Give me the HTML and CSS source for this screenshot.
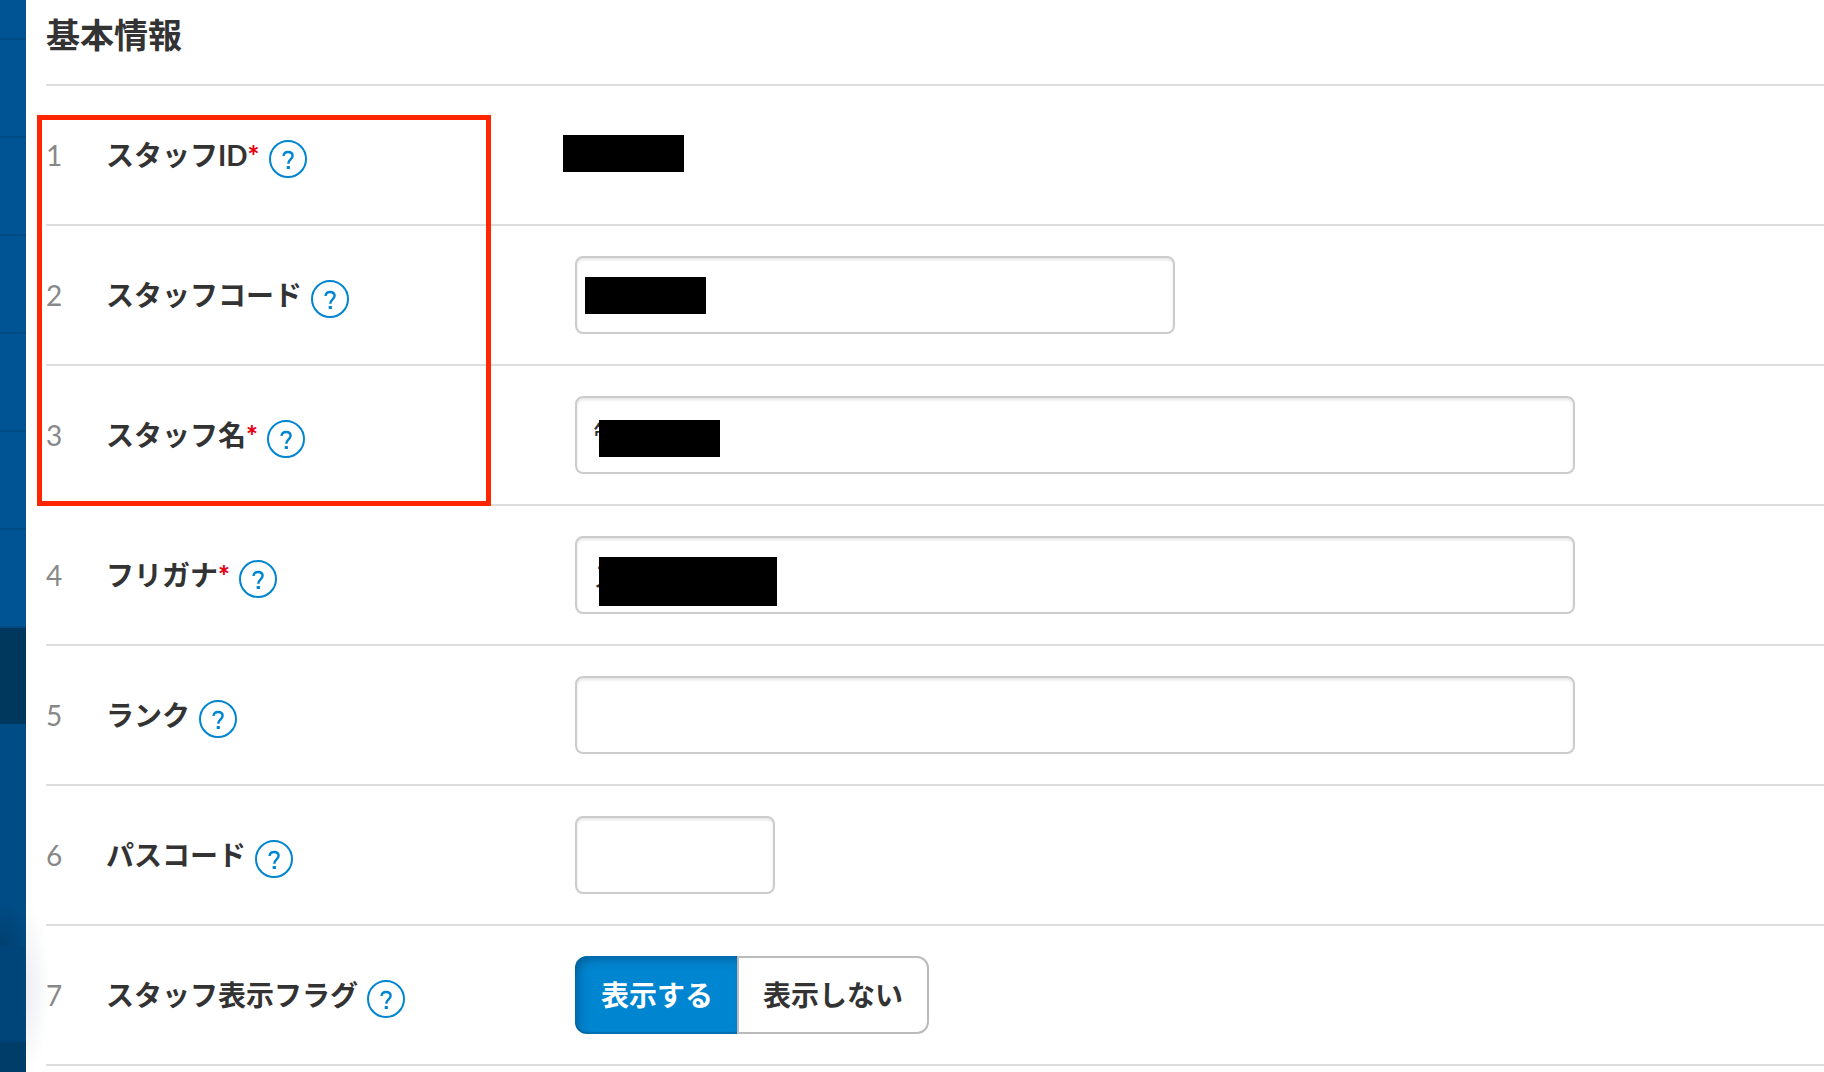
FILE: index.html
```html
<!DOCTYPE html>
<html lang="ja">
<head>
<meta charset="utf-8">
<meta name="viewport" content="width=device-width, initial-scale=1">
<title>基本情報</title>
<link rel="stylesheet" href="styles.css">
</head>
<body>
<svg class="defs" aria-hidden="true">
  <symbol id="help" viewBox="0 0 38 38">
    <circle cx="19" cy="19" r="18" fill="none" stroke="currentColor" stroke-width="2"/>
    <path d="M14.6 16c0-2.6 1.8-4 4.4-4s4.6 1.4 4.6 3.8c0 3.6-4.3 3.8-4.3 8" fill="none" stroke="currentColor" stroke-width="2.4"/>
    <path d="M17.7 26h3.2v3h-3.2z" fill="currentColor"/>
  </symbol>
</svg>
<div class="page">
  <nav class="sidebar" aria-label="メニュー">
    <a class="nav-item nav-item-cut" href="#"></a>
    <a class="nav-item" href="#"></a>
    <a class="nav-item" href="#"></a>
    <a class="nav-item" href="#"></a>
    <a class="nav-item" href="#"></a>
    <a class="nav-item" href="#"></a>
    <a class="nav-item" href="#"></a>
    <a class="nav-item nav-item-active" href="#"></a>
    <div class="subnav"></div>
    <a class="nav-item nav-item-lower" href="#"></a>
    <div class="nav-foot"></div>
  </nav>
  <main class="main">
    <h1 class="title">基本情報</h1>
    <form class="form">
      <div class="row">
        <span class="num">1</span>
        <div class="name"><label for="staff-id">スタッフID<span class="req">*</span></label><button type="button" class="help" aria-label="ヘルプ"><svg><use href="#help"/></svg></button></div>
        <div class="field"><output id="staff-id"></output><span class="mask mask-id"></span></div>
      </div>
      <div class="row">
        <span class="num">2</span>
        <div class="name"><label for="code">スタッフコード</label><button type="button" class="help" aria-label="ヘルプ"><svg><use href="#help"/></svg></button></div>
        <div class="field"><input class="input input-medium" id="code" type="text"><span class="mask mask-code"></span></div>
      </div>
      <div class="row">
        <span class="num">3</span>
        <div class="name"><label for="staff-name">スタッフ名<span class="req">*</span></label><button type="button" class="help" aria-label="ヘルプ"><svg><use href="#help"/></svg></button></div>
        <div class="field"><input class="input" id="staff-name" type="text" value="管"><span class="mask mask-name"></span></div>
      </div>
      <div class="row">
        <span class="num">4</span>
        <div class="name"><label for="kana">フリガナ<span class="req">*</span></label><button type="button" class="help" aria-label="ヘルプ"><svg><use href="#help"/></svg></button></div>
        <div class="field"><input class="input" id="kana" type="text" value="ス"><span class="mask mask-kana"></span></div>
      </div>
      <div class="row">
        <span class="num">5</span>
        <div class="name"><label for="rank">ランク</label><button type="button" class="help" aria-label="ヘルプ"><svg><use href="#help"/></svg></button></div>
        <div class="field"><input class="input" id="rank" type="text"></div>
      </div>
      <div class="row">
        <span class="num">6</span>
        <div class="name"><label for="pass">パスコード</label><button type="button" class="help" aria-label="ヘルプ"><svg><use href="#help"/></svg></button></div>
        <div class="field"><input class="input input-small" id="pass" type="text"></div>
      </div>
      <div class="row">
        <span class="num">7</span>
        <div class="name"><span id="flag">スタッフ表示フラグ</span><button type="button" class="help" aria-label="ヘルプ"><svg><use href="#help"/></svg></button></div>
        <div class="field toggle" role="radiogroup" aria-labelledby="flag">
          <label class="choice"><input type="radio" name="show" checked><span>表示する</span></label>
          <label class="choice"><input type="radio" name="show"><span>表示しない</span></label>
        </div>
      </div>
    </form>
    <div class="callout"></div>
  </main>
</div>
</body>
</html>
```
FILE: styles.css
```css
* {
  box-sizing: border-box;
}

body {
  margin: 0;
  background: #fff;
  color: #333;
  font-family: Lato, "Noto Sans CJK JP", sans-serif;
  font-size: 28px;
  line-height: 40px;
}

.defs {
  display: none;
}

.page {
  display: flex;
  min-height: 100vh;
}

/* Sidebar */
.sidebar {
  display: flex;
  flex: none;
  flex-direction: column;
  width: 26px;
  background: #005493;
}

.nav-item {
  height: 98px;
  border-bottom: 2px solid #004b85;
}

.nav-item-cut {
  height: 40px;
}

.nav-item-active,
.nav-item-lower {
  height: 96px;
  border-bottom: 0;
  background: #00375d;
}

.nav-item-lower {
  background: #00457a;
}

.subnav {
  height: 222px;
  background: radial-gradient(36px 44px at 0 100%, #00406f, #004c86);
}

.nav-foot {
  flex: 1;
  background: #003d68;
}

/* Main column */
.main {
  position: relative;
  flex: 1;
  min-width: 0;
  padding-left: 20px;
  background: radial-gradient(24px 88px at 0 988px, #eceef2, #fff);
}

.title {
  margin: 0;
  padding: 10px 0 24px;
  border-bottom: 2px solid #ddd;
  font-size: 34px;
  line-height: 50px;
}

.row {
  display: grid;
  grid-template-columns: 60px 469px minmax(0, 1fr);
  align-items: center;
  min-height: 140px;
  border-bottom: 2px solid #ddd;
}

.num {
  color: #888;
}

.name {
  display: flex;
  align-items: center;
  gap: 9px;
  font-weight: 700;
}

.req {
  color: #e60012;
  font-weight: 900;
}

.help {
  width: 38px;
  height: 38px;
  margin-top: 8px;
  padding: 0;
  border: 0;
  background: none;
  color: #0085d0;
}

.help svg {
  display: block;
  width: 38px;
  height: 38px;
}

.field {
  position: relative;
  display: flex;
  min-height: 78px;
}

.input {
  width: 1000px;
  max-width: 100%;
  height: 78px;
  padding: 0 16px;
  border: 2px solid #ccc;
  border-radius: 8px;
  background: #fff;
  box-shadow: inset 0 2px 3px rgba(0, 0, 0, 0.1);
  color: #333;
  font: inherit;
}

.input-medium {
  width: 600px;
}

.input-small {
  width: 200px;
}

/* Blocks that hide personal data */
.mask {
  position: absolute;
  top: 21px;
  left: 24px;
  width: 121px;
  height: 37px;
  background: #000;
}

.mask-id {
  top: 19px;
  left: -12px;
}

.mask-code {
  left: 10px;
}

.mask-name {
  top: 24px;
}

.mask-kana {
  width: 178px;
  height: 49px;
}

/* Segmented choice */
.choice input {
  position: absolute;
  opacity: 0;
}

.choice span {
  display: block;
  height: 78px;
  padding: 0 24px;
  border: 2px solid #bbb;
  background: #fff;
  font-weight: 700;
  line-height: 74px;
}

.choice:first-child span {
  border-right: 0;
  border-radius: 12px 0 0 12px;
}

.choice:last-child span {
  border-radius: 0 12px 12px 0;
}

.choice input:checked + span {
  padding: 2px 24px 0 26px;
  border: 0;
  background: #0085d0;
  box-shadow: inset 0 -2px 1px rgba(0, 30, 60, 0.2), inset 6px 6px 12px -4px rgba(0, 30, 60, 0.4);
  color: #fff;
}

/* Highlight frame over the first three names */
.callout {
  position: absolute;
  top: 115px;
  left: 11px;
  width: 454px;
  height: 391px;
  border: 5px solid #ff2600;
  pointer-events: none;
}
```
